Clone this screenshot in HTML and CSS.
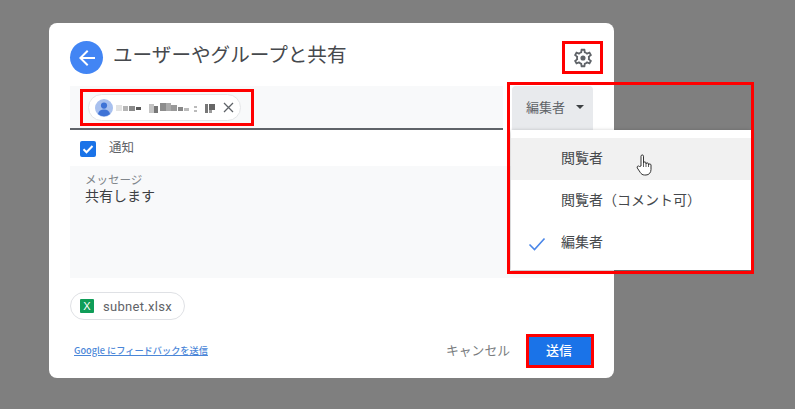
FILE: index.html
```html
<!DOCTYPE html>
<html lang="ja">
<head>
<meta charset="utf-8">
<title>共有</title>
<link rel="stylesheet" href="styles.css">
</head>
<body>
<div class="dialog">
  <header class="head">
    <span class="back"><svg width="24" height="24" viewBox="0 0 24 24"><path d="M20 11H7.830l5.590-5.590L12 4l-8 8 8 8 1.410-1.410L7.830 13H20z" fill="#fff"/></svg></span>
    <h1 class="title">ユーザーやグループと共有</h1>
    <span class="gear"><svg width="22" height="22" viewBox="0 0 24 24"><path fill="#5f6368" fill-rule="evenodd" d="M19.43 12.98c.04-.32.07-.64.07-.98s-.03-.66-.07-.98l2.11-1.65a.5.5 0 0 0 .12-.64l-2-3.46a.5.5 0 0 0-.61-.22l-2.49 1a7.3 7.3 0 0 0-1.69-.98l-.38-2.65A.49.49 0 0 0 14 2h-4a.49.49 0 0 0-.49.42l-.38 2.65c-.61.25-1.17.59-1.69.98l-2.49-1a.57.57 0 0 0-.18-.03.5.5 0 0 0-.43.25l-2 3.46a.49.49 0 0 0 .12.64l2.11 1.65c-.04.32-.07.65-.07.98s.03.66.07.98l-2.11 1.65a.5.5 0 0 0-.12.64l2 3.46a.5.5 0 0 0 .61.22l2.49-1c.52.4 1.08.73 1.69.98l.38 2.65c.03.24.24.42.49.42h4c.25 0 .46-.18.49-.42l.38-2.65c.61-.25 1.17-.59 1.69-.98l2.49 1c.06.02.12.03.18.03a.5.5 0 0 0 .43-.25l2-3.46a.5.5 0 0 0-.12-.64zm-1.98-1.71c.04.31.05.52.05.73s-.02.43-.05.73l-.14 1.13.89.7 1.08.84-.7 1.21-1.27-.51-1.04-.42-.9.68c-.43.32-.84.56-1.25.73l-1.06.43-.16 1.13-.2 1.35h-1.4l-.19-1.35-.16-1.13-1.06-.43a5.7 5.7 0 0 1-1.23-.71l-.91-.7-1.06.43-1.27.51-.7-1.21 1.08-.84.89-.7-.14-1.13A8 8 0 0 1 6.5 12c0-.2.02-.43.05-.73l.14-1.13-.89-.7-1.08-.84.7-1.21 1.27.51 1.04.42.9-.68c.43-.32.84-.56 1.25-.73l1.06-.43.16-1.13.2-1.35h1.39l.19 1.35.16 1.13 1.06.43c.43.18.83.41 1.23.71l.91.7 1.06-.43 1.27-.51.7 1.21-1.07.85-.89.7z"/><circle cx="12" cy="12" r="2.800" fill="#5f6368"/></svg></span>
  </header>

  <div class="recipient-row">
    <div class="recipient-field">
      <span class="person-chip">
        <svg class="avatar" width="18" height="18" viewBox="0 0 18 18"><circle cx="9" cy="9" r="9" fill="#a8c0ee"/><circle cx="9" cy="6.600" r="3.100" fill="#3f73d6"/><path d="M3 15c.6-3.200 3-4.600 6-4.600s5.400 1.400 6 4.600a9 9 0 0 1-12 0z" fill="#3f73d6"/></svg>
        <svg class="mosaic" width="104" height="12" viewBox="0 0 104 12">
          <rect x="0" y="3" width="6" height="6" fill="#e3e3e3"/><rect x="7" y="4" width="5" height="5" fill="#b5b5b5"/><rect x="13" y="4" width="6" height="5" fill="#8a8a8a"/><rect x="20" y="5" width="5" height="3" fill="#5a5a5a"/>
          <rect x="33" y="2" width="5" height="9" fill="#c4c4c4"/><rect x="38" y="4" width="4" height="7" fill="#777"/><rect x="44" y="1" width="6" height="8" fill="#8c8c8c"/><rect x="50" y="1" width="5" height="8" fill="#aaa"/><rect x="55" y="3" width="6" height="6" fill="#999"/><rect x="62" y="5" width="5" height="4" fill="#888"/><rect x="68" y="6" width="5" height="3" fill="#bbb"/><rect x="78" y="4" width="3" height="2" fill="#bbb"/><rect x="78" y="8" width="3" height="2" fill="#bbb"/><rect x="89" y="2" width="3" height="9" fill="#777"/><rect x="93" y="2" width="6" height="6" fill="#666"/><rect x="93" y="8" width="3" height="3" fill="#999"/>
        </svg>
        <svg class="chip-x" width="11" height="11" viewBox="0 0 11 11"><path d="M1 1l9 9M10 1l-9 9" stroke="#5f6368" stroke-width="1.300" fill="none"/></svg>
      </span>
    </div>
    <button class="role-btn"><span class="role-label">編集者</span><span class="caret"></span></button>
  </div>

  <label class="notify">
    <span class="check"><svg width="16" height="16" viewBox="0 0 16 16"><path d="M3.500 8.200l3 3 6-6.200" stroke="#fff" stroke-width="2" fill="none"/></svg></span>
    <span class="notify-label">通知</span>
  </label>

  <div class="message">
    <div class="msg-label">メッセージ</div>
    <div class="msg-text">共有します</div>
  </div>

  <div class="file-chip">
    <span class="xl">X</span>
    <span class="file-name">subnet.xlsx</span>
  </div>

  <footer class="foot">
    <a class="feedback">Google にフィードバックを送信</a>
    <span class="cancel">キャンセル</span>
    <button class="send"><span class="send-label">送信</span></button>
  </footer>
</div>

<div class="menu">
  <div class="item hover">閲覧者</div>
  <div class="item">閲覧者（コメント可）</div>
  <div class="item"><svg class="tick" width="18" height="14" viewBox="0 0 18 14"><path d="M1.500 7.500l5 5L16.500 1.500" stroke="#4a86e8" stroke-width="1.600" fill="none"/></svg>編集者</div>
</div>

<svg class="hand" width="18" height="24" viewBox="0 0 18 24"><path d="M5 13V3.200C5 1.500 7.500 1.500 7.500 3.200V10c0-1.500 2.500-1.500 2.500 0v1c0-1.500 2.500-1.500 2.500 0v1c0-1.400 2.500-1.400 2.500 0v4.500c0 3-2 5.500-5 5.500H8.500c-2 0-3.200-1-4.200-2.500L1.300 15c-.9-1.400 1-2.800 2.200-1.500z" fill="#fff" stroke="#333" stroke-width="1"/><path d="M7.500 10v4M10 11v3M12.500 12v2" stroke="#333" stroke-width=".8"/></svg>

<span class="mark mark-chip"></span>
<span class="mark mark-gear"></span>
<span class="mark mark-menu"></span>
<span class="mark mark-send"></span>
</body>
</html>
```

FILE: styles.css
```css
* { box-sizing: border-box; }
html, body { margin: 0; height: 100%; }
body {
  background: #7f7f7f;
  width: 795px;
  height: 409px;
  overflow: hidden;
  position: relative;
  padding: 23px 0 0 49px;
  font-family: "Noto Sans CJK JP", "Noto Sans", sans-serif;
  color: #3c4043;
}
.dialog {
  width: 565px;
  height: 355px;
  background: #fff;
  border-radius: 8px;
  padding: 18px 21px 0;
  display: flex;
  flex-direction: column;
}
.head { display: flex; align-items: center; height: 33px; }
.back {
  width: 33px; height: 33px; border-radius: 50%;
  background: #4285f4;
  display: flex; align-items: center; justify-content: center;
}
.title { margin: 0 0 7px 10px; font-size: 19.600px; font-weight: 400; color: #46494d; line-height: 28px; }
.gear { margin-left: auto; margin-right: -1px; display: flex; }
.recipient-row { display: flex; margin-top: 12px; align-items: flex-start; }
.recipient-field {
  width: 433px; height: 44px;
  background: #f8f9fa;
  border-bottom: 2px solid #5f6368;
  padding: 8px 0 0 18px;
}
.person-chip {
  display: inline-flex; align-items: center;
  width: 153px; height: 27px;
  background: #fff;
  border: 1px solid #e4e6e8;
  border-radius: 14px;
  padding-left: 6px;
}
.mosaic { margin-left: 3px; flex: none; }
.chip-x { margin-left: 3px; flex: none; }
.role-btn {
  margin-left: 9px;
  width: 81px; height: 44px;
  border: 0; border-radius: 4px 4px 0 0;
  background: #e8eaed;
  color: #5f6368;
  font: 400 13px/1 "Noto Sans CJK JP", sans-serif;
  display: flex; align-items: center;
  padding: 0 0 0 14px;
}
.role-label { margin-bottom: 4px; }
.caret {
  margin: 0 0 2px 11px;
  border: 4px solid transparent;
  border-top: 4px solid #3c4043;
  border-bottom: 0;
}
.notify { display: flex; align-items: center; margin: 10px 0 0 10px; height: 17px; font-size: 12.500px; color: #5f6368; }
.notify-label { margin-bottom: 5px; }
.check { width: 16px; height: 16px; border-radius: 2px; background: #1a73e8; display: flex; margin-right: 13px; }
.message {
  margin-top: 9px;
  height: 112px;
  width: 500px;
  background: #f8f9fa;
  padding: 6px 0 0 15px;
}
.msg-label { font-size: 11.500px; line-height: 15px; color: #80868b; }
.msg-text { font-size: 14px; line-height: 16px; color: #3c4043; }
.file-chip {
  margin-top: 14px;
  width: 115px; height: 28px;
  border: 1px solid #dfe1e5;
  border-radius: 14px;
  display: flex; align-items: center;
  padding-left: 9px;
}
.xl {
  width: 14px; height: 14px; background: #0f9d58; color: #fff; border-radius: 1px;
  font: 400 11px/14px "Liberation Sans", sans-serif; text-align: center;
}
.file-name { margin-left: 9px; font: 400 13px/1 Roboto, sans-serif; color: #5f6368; letter-spacing: .3px; }
.foot { display: flex; align-items: center; margin-top: 16px; height: 30px; padding-left: 4px; }
.feedback { font-size: 9.200px; line-height: 14px; color: #4a86d8; text-decoration: underline; margin-bottom: 2px; font-weight: 500; }
.cancel { margin-left: auto; font-size: 12.800px; color: #7a7d80; margin-bottom: 3px; }
.send {
  margin-left: 17px; margin-right: 2px;
  width: 64px; height: 30px; border: 0; border-radius: 2px;
  background: #1a73e8; color: #fff;
  font: 500 13px/1 "Noto Sans CJK JP", sans-serif;
  padding: 0 0 3px;
}
.menu {
  position: absolute; left: 511px; top: 130px;
  width: 240px; height: 140px;
  background: #fff;
  padding-top: 8px;
  box-shadow: 0 1px 4px rgba(0,0,0,.3);
}
.item {
  height: 42px; padding-left: 50px; position: relative;
  font-size: 14px; line-height: 39px; color: #45484c;
}
.item.hover { background: #f1f1f1; }
.tick { position: absolute; left: 17px; top: 15px; }
.hand { position: absolute; left: 636px; top: 153px; }
.mark { position: absolute; border: 3px solid #f00; }
.mark-chip { left: 80px; top: 89px; width: 174px; height: 37px; }
.mark-gear { left: 562px; top: 41px; width: 41px; height: 33px; }
.mark-menu { left: 507px; top: 82px; width: 247px; height: 192px; }
.mark-send { left: 526px; top: 334px; width: 68px; height: 34px; }
```
